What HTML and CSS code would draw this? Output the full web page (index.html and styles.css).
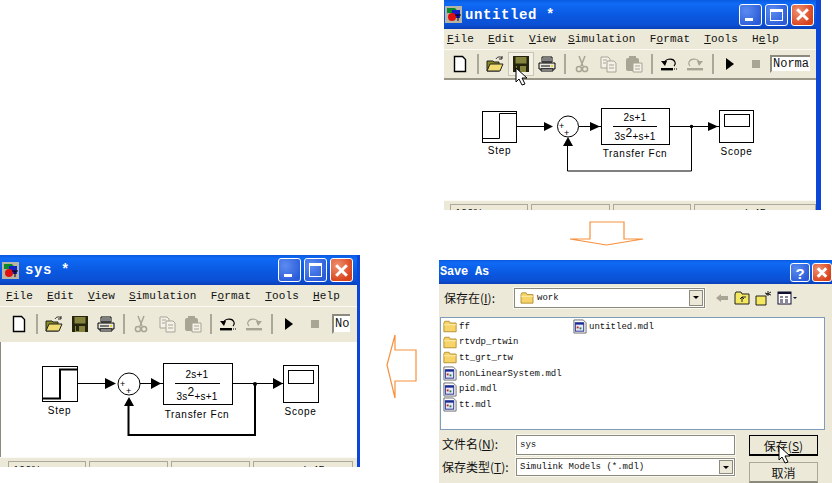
FILE: index.html
```html
<!DOCTYPE html>
<html lang="en">
<head>
  <meta charset="UTF-8">
  <title>Saving a Simulink model</title>
  <link rel="stylesheet" href="styles.css">
</head>
<body>
  <svg class="icon-defs" width="0" height="0">
    <symbol id="i-app" viewBox="0 0 17 17">
      <rect x="0" y="0" width="17" height="17" fill="#b8b4a4"/>
      <path d="M2 2h8l4 5H2z" fill="#0a8a2a"/>
      <rect x="7" y="4" width="8" height="8" fill="#1420c8"/>
      <circle cx="7" cy="11" r="4" fill="#e01010"/>
      <path d="M10 9h6M13 9v6" stroke="#000" fill="none"/>
    </symbol>
    <symbol id="i-new" viewBox="0 0 18 18">
      <path d="M3.500 1.500h8l3 3v12h-11z" fill="#fff" stroke="#000" stroke-width="1.400"/>
    </symbol>
    <symbol id="i-open" viewBox="0 0 18 18">
      <path d="M1 6h6l1 1h5v9H1z" fill="#8a8a20" stroke="#222" />
      <path d="M1 16l3-7h13l-3 7z" fill="#f0dc70" stroke="#222"/>
      <path d="M10 4c1-2 4-3 6-1M16 1v3h-3" fill="none" stroke="#222"/>
    </symbol>
    <symbol id="i-save" viewBox="0 0 18 18">
      <rect x="1" y="1" width="16" height="16" fill="#25250c"/>
      <rect x="3.500" y="2" width="11" height="6.500" fill="#84843f"/>
      <rect x="4" y="11" width="10" height="6" fill="#84843f"/>
      <rect x="5" y="11" width="3" height="5" fill="#25250c"/>
    </symbol>
    <symbol id="i-print" viewBox="0 0 18 18">
      <path d="M4 2h10v5H4z" fill="#fff" stroke="#000"/>
      <path d="M1 8h16v6H1z" fill="#e8e8e0" stroke="#000"/>
      <path d="M3 14h12v2H3z" fill="#fff" stroke="#000"/>
      <path d="M5 4h8M5 6h8M3 11h9" stroke="#000"/>
      <rect x="13" y="10" width="2" height="2" fill="#e8d830"/>
    </symbol>
    <symbol id="i-cut" viewBox="0 0 18 18">
      <path d="M6 1l4 10M12 1L8 11" stroke="#a8a595" stroke-width="1.500" fill="none"/>
      <circle cx="6" cy="14" r="2.600" fill="none" stroke="#a8a595" stroke-width="1.500"/>
      <circle cx="12" cy="14" r="2.600" fill="none" stroke="#a8a595" stroke-width="1.500"/>
    </symbol>
    <symbol id="i-copy" viewBox="0 0 18 18">
      <path d="M2 2h7l2 2v9H2z" fill="#f4f2e8" stroke="#a8a595"/>
      <path d="M8 6h7l2 2v9H8z" fill="#f4f2e8" stroke="#a8a595"/>
      <path d="M4 5h4M4 8h3M10 10h5M10 13h5" stroke="#a8a595"/>
    </symbol>
    <symbol id="i-paste" viewBox="0 0 18 18">
      <rect x="1" y="3" width="13" height="13" rx="2" fill="#a8a595"/>
      <rect x="4" y="1" width="7" height="3" fill="#a8a595"/>
      <path d="M8 8h9v9H8z" fill="#f4f2e8" stroke="#a8a595"/>
      <path d="M10 11h5M10 14h5" stroke="#a8a595"/>
    </symbol>
    <symbol id="i-undo" viewBox="0 0 18 18">
      <path d="M5 9C3 4 13 2 15 7c1 2 0 3-1 4" fill="none" stroke="#000" stroke-width="1.200"/>
      <path d="M1 6l4 5 2-5z" fill="#000"/>
      <rect x="1" y="13" width="12" height="2.400" fill="#000"/>
      <path d="M14 14h3" stroke="#000" stroke-dasharray="1 1"/>
    </symbol>
    <symbol id="i-redo" viewBox="0 0 18 18">
      <path d="M13 9C15 4 5 2 3 7c-1 2 0 3 1 4" fill="none" stroke="#a8a595" stroke-width="1.200"/>
      <path d="M17 6l-4 5-2-5z" fill="#a8a595"/>
      <rect x="1" y="13" width="16" height="2.400" fill="#a8a595"/>
    </symbol>
    <symbol id="i-play" viewBox="0 0 18 18">
      <path d="M5 3l8 6-8 6z" fill="#000"/>
    </symbol>
    <symbol id="i-stop" viewBox="0 0 18 18">
      <rect x="5" y="5" width="8" height="8" fill="#a8a595"/>
    </symbol>
    <symbol id="i-folder" viewBox="0 0 16 14">
      <path d="M1 3l1-2h5l1 2h7v10H1z" fill="#f6d469" stroke="#b08a2a"/>
      <path d="M1 5h14" stroke="#fff2b8"/>
    </symbol>
    <symbol id="i-model" viewBox="0 0 15 16">
      <path d="M1 1h10l3 3v11H1z" fill="#fff" stroke="#666"/>
      <rect x="2.500" y="4" width="9" height="9" fill="#e8e8f8" stroke="#1a2a90"/>
      <rect x="2.500" y="4" width="9" height="2" fill="#1a2a90"/>
      <rect x="4" y="8" width="2" height="2" fill="#c02020"/>
      <rect x="7" y="9" width="2" height="2" fill="#208040"/>
    </symbol>
  </svg>

  <!-- Model window before saving -->
  <section class="window window-untitled">
    <div class="titlebar">
      <svg class="app-icon"><use href="#i-app"/></svg>
      <span class="title-text">untitled *</span>
      <div class="caption-btns">
        <span class="cap-btn cap-min"></span>
        <span class="cap-btn cap-max"></span>
        <span class="cap-btn cap-close"></span>
      </div>
    </div>
    <div class="menubar">
      <span><u>F</u>ile</span><span><u>E</u>dit</span><span><u>V</u>iew</span><span class="menu-sim"><u>S</u>imulation</span><span>F<u>o</u>rmat</span><span><u>T</u>ools</span><span>H<u>e</u>lp</span>
    </div>
    <div class="toolbar">
      <span class="tool"><svg><use href="#i-new"/></svg></span>
      <span class="sep"></span>
      <span class="tool"><svg><use href="#i-open"/></svg></span>
      <span class="tool tool-hover"><svg><use href="#i-save"/></svg></span>
      <span class="tool"><svg><use href="#i-print"/></svg></span>
      <span class="sep"></span>
      <span class="tool"><svg><use href="#i-cut"/></svg></span>
      <span class="tool"><svg><use href="#i-copy"/></svg></span>
      <span class="tool"><svg><use href="#i-paste"/></svg></span>
      <span class="sep"></span>
      <span class="tool"><svg><use href="#i-undo"/></svg></span>
      <span class="tool"><svg><use href="#i-redo"/></svg></span>
      <span class="sep"></span>
      <span class="tool"><svg><use href="#i-play"/></svg></span>
      <span class="tool"><svg><use href="#i-stop"/></svg></span>
      <span class="mode-box">Normal</span>
    </div>
    <div class="canvas">
      <svg class="diagram" width="372" height="120" viewBox="444 81 372 120">
        <rect class="block" x="482.500" y="112.500" width="34" height="31"/>
        <path class="wire" d="M483 139.500h16.500V114.500H516"/>
        <path class="wire" d="M517 127.500h30M579 127.500h22M670 127.500h50M691.500 127.500V172H567.500V146"/>
        <path class="head" d="M544 123l9 4.500-9 4.500zM590 123l10 4.500-10 4.500zM708 123l10 4.500-10 4.500zM568 138l5 9h-10z"/>
        <circle class="block" cx="568" cy="127.500" r="10.500"/>
        <circle cx="691.500" cy="127.500" r="1.800"/>
        <text class="sign" x="559" y="130">+</text>
        <text class="sign" x="564" y="137">+</text>
        <rect class="block" x="601.500" y="109.500" width="68" height="36"/>
        <text class="tf" x="635" y="122" text-anchor="middle">2s+1</text>
        <path class="wire" d="M613 127.500h44"/>
        <text class="tf" x="635" y="141" text-anchor="middle">3s<tspan class="exp" dy="-3">2</tspan><tspan dy="3">+s+1</tspan></text>
        <rect class="block" x="719.500" y="111.500" width="34" height="32"/>
        <rect class="block" x="724.500" y="115.500" width="25" height="12"/>
        <text class="label" x="499.500" y="155" text-anchor="middle">Step</text>
        <text class="label" x="635" y="158" text-anchor="middle">Transfer Fcn</text>
        <text class="label" x="736.500" y="156" text-anchor="middle">Scope</text>
      </svg>
    </div>
    <div class="statusbar">
      <span class="cell cell-zoom">100%</span><span class="cell cell-mid"></span><span class="cell cell-mid"></span><span class="cell cell-solver">ode45</span>
    </div>
    <svg class="cursor cursor-save" width="14" height="19" viewBox="0 0 14 19"><path d="M1 1v14l3-3 3 6 3-1-3-6h5z" fill="#fff" stroke="#000"/></svg>
  </section>

  <svg class="block-arrow arrow-down" width="76" height="26" viewBox="0 0 76 26">
    <path d="M21 1h34v17h19L37.500 24 1 18h20z"/>
  </svg>

  <!-- Save As dialog -->
  <section class="dialog">
    <div class="dialog-title">
      <span class="title-text title-dialog">Save As</span>
      <div class="caption-btns">
        <span class="cap-btn cap-help">?</span>
        <span class="cap-btn cap-close"></span>
      </div>
    </div>
    <div class="look-row">
      <span class="field-label look-label">保存在(<u>I</u>):</span>
      <div class="combo combo-look">
        <svg class="folder"><use href="#i-folder"/></svg>
        <span>work</span>
        <span class="combo-btn"></span>
      </div>
      <div class="dialog-tools">
        <svg width="14" height="12" viewBox="0 0 14 12"><path d="M1 6l5-4v2h7v4H6v2z" fill="#a8a595"/></svg>
        <svg width="16" height="14" viewBox="0 0 16 14"><path d="M1 3l1-2h5l1 2h7v10H1z" fill="#f4e860" stroke="#222"/><path d="M8 11V6M6 8l2-2 2 2M8 6h4" stroke="#222" fill="none"/></svg>
        <svg width="17" height="16" viewBox="0 0 17 16"><path d="M1 6h10v9H1z" fill="#f4e860" stroke="#222"/><path d="M13 1v5M10 3l6 2M16 2l-5 3" stroke="#222"/></svg>
        <svg width="21" height="14" viewBox="0 0 21 14"><rect x="1" y="1" width="13" height="12" fill="#fff" stroke="#113"/><rect x="1" y="1" width="13" height="2" fill="#113"/><path d="M3 6h3M8 6h3M3 9h3M8 9h3M3 11h3M8 11h3" stroke="#113"/><path d="M16 6h4l-2 2z" fill="#113"/></svg>
      </div>
    </div>
    <div class="file-list">
      <div class="file-col">
        <div class="file"><svg><use href="#i-folder"/></svg>ff</div>
        <div class="file"><svg><use href="#i-folder"/></svg>rtvdp_rtwin</div>
        <div class="file"><svg><use href="#i-folder"/></svg>tt_grt_rtw</div>
        <div class="file"><svg><use href="#i-model"/></svg>nonLinearSystem.mdl</div>
        <div class="file"><svg><use href="#i-model"/></svg>pid.mdl</div>
        <div class="file"><svg><use href="#i-model"/></svg>tt.mdl</div>
      </div>
      <div class="file-col">
        <div class="file"><svg><use href="#i-model"/></svg>untitled.mdl</div>
      </div>
    </div>
    <div class="save-form">
      <span class="field-label">文件名(<u>N</u>):</span>
      <div class="combo combo-name">sys</div>
      <button class="dlg-btn dlg-default">保存(<u>S</u>)</button>
      <span class="field-label">保存类型(<u>T</u>):</span>
      <div class="combo combo-type">Simulink Models (*.mdl)<span class="combo-btn"></span></div>
      <button class="dlg-btn dlg-cancel">取消</button>
    </div>
    <svg class="cursor cursor-dlg" width="14" height="19" viewBox="0 0 14 19"><path d="M1 1v14l3-3 3 6 3-1-3-6h5z" fill="#fff" stroke="#000"/></svg>
  </section>

  <svg class="block-arrow arrow-left" width="31" height="65" viewBox="0 0 31 65">
    <path d="M9 1v15h21v31H9v17L1 31z"/>
  </svg>

  <!-- Model window after saving -->
  <section class="window window-sys">
    <div class="titlebar">
      <svg class="app-icon"><use href="#i-app"/></svg>
      <span class="title-text">sys *</span>
      <div class="caption-btns">
        <span class="cap-btn cap-min"></span>
        <span class="cap-btn cap-max"></span>
        <span class="cap-btn cap-close"></span>
      </div>
    </div>
    <div class="menubar">
      <span><u>F</u>ile</span><span><u>E</u>dit</span><span><u>V</u>iew</span><span><u>S</u>imulation</span><span>F<u>o</u>rmat</span><span><u>T</u>ools</span><span><u>H</u>elp</span>
    </div>
    <div class="toolbar">
      <span class="tool"><svg><use href="#i-new"/></svg></span>
      <span class="sep"></span>
      <span class="tool"><svg><use href="#i-open"/></svg></span>
      <span class="tool"><svg><use href="#i-save"/></svg></span>
      <span class="tool"><svg><use href="#i-print"/></svg></span>
      <span class="sep"></span>
      <span class="tool"><svg><use href="#i-cut"/></svg></span>
      <span class="tool"><svg><use href="#i-copy"/></svg></span>
      <span class="tool"><svg><use href="#i-paste"/></svg></span>
      <span class="sep"></span>
      <span class="tool"><svg><use href="#i-undo"/></svg></span>
      <span class="tool"><svg><use href="#i-redo"/></svg></span>
      <span class="sep"></span>
      <span class="tool"><svg><use href="#i-play"/></svg></span>
      <span class="tool"><svg><use href="#i-stop"/></svg></span>
      <span class="mode-box">Normal</span>
    </div>
    <div class="canvas">
      <svg class="diagram" width="354" height="116" viewBox="0 342 354 116">
        <rect class="block" x="41.500" y="366.500" width="35" height="35"/>
        <path class="wire wire-thick" d="M42 398.500h17V369.500H77"/>
        <path class="wire" d="M77 383.500h28M139 383.500h23M231 383.500h51"/>
        <path class="wire wire-thick" d="M254 384V435H127.500V404"/>
        <path class="head" d="M104 378l11 5.500-11 5.500zM150 378l10 5.500-10 5.500zM272 378l10 5.500-10 5.500zM128 397l5 9h-10z"/>
        <circle class="block" cx="128" cy="384" r="11"/>
        <circle cx="254" cy="384" r="2"/>
        <text class="sign" x="119" y="387">+</text>
        <text class="sign" x="125" y="394">+</text>
        <rect class="block" x="162.500" y="363.500" width="69" height="41"/>
        <text class="tf" x="196" y="378" text-anchor="middle">2s+1</text>
        <path class="wire" d="M174 383.500h45"/>
        <text class="tf" x="196" y="400" text-anchor="middle">3s<tspan class="exp" dy="-4">2</tspan><tspan dy="4">+s+1</tspan></text>
        <rect class="block" x="282.500" y="365.500" width="35" height="37"/>
        <rect class="block" x="287.500" y="370.500" width="25" height="13"/>
        <text class="label" x="58.500" y="414" text-anchor="middle">Step</text>
        <text class="label" x="196" y="418" text-anchor="middle">Transfer Fcn</text>
        <text class="label" x="299.500" y="415" text-anchor="middle">Scope</text>
      </svg>
    </div>
    <div class="statusbar">
      <span class="cell cell-zoom">100%</span><span class="cell cell-mid"></span><span class="cell cell-mid"></span><span class="cell cell-solver">ode45</span>
    </div>
  </section>
</body>
</html>
```

FILE: styles.css
```css
* {
  margin: 0;
  padding: 0;
  box-sizing: border-box;
}

body {
  width: 832px;
  height: 483px;
  background: white;
  overflow: hidden;
  position: relative;
  font-family: "Liberation Mono", monospace;
  color: #111;
}

u {
  text-decoration: underline;
}

.icon-defs {
  position: absolute;
}

/* Windows sit on a free canvas */
.window,
.dialog {
  position: absolute;
  display: flex;
  flex-direction: column;
  overflow: hidden;
}

.window-untitled {
  left: 444px;
  top: 0;
  width: 377px;
  height: 210px;
  border-right: 5px solid #0b46d8;
}

.window-sys {
  left: 0;
  top: 255px;
  width: 360px;
  height: 212px;
  border-right: 3px solid #0b46d8;
}

.dialog {
  left: 439px;
  top: 260px;
  width: 393px;
  height: 223px;
  background: #ece9d8;
}

/* Title bars */
.titlebar,
.dialog-title {
  display: flex;
  align-items: center;
  flex: none;
  background: linear-gradient(180deg, #0a5ae0 0%, #0f6af5 12%, #0a58e0 55%, #0b50d4 85%, #0a3fb8 100%);
  color: white;
}

.window-untitled .titlebar {
  height: 29px;
  padding: 0 2px 0 1px;
}

.window-sys .titlebar {
  height: 30px;
  padding: 0 4px 0 2px;
}

.dialog-title {
  height: 24px;
  padding: 0 0 0 1px;
}

.app-icon {
  width: 17px;
  height: 17px;
  flex: none;
  margin-right: 3px;
}

.window-sys .app-icon {
  margin-right: 6px;
}

.title-text {
  font-size: 14px;
  font-weight: bold;
  letter-spacing: 0.6px;
  white-space: pre;
}

.title-dialog {
  font-size: 12px;
  letter-spacing: -0.2px;
}

.caption-btns {
  margin-left: auto;
  display: flex;
  gap: 3px;
}

.cap-btn {
  position: relative;
  display: block;
  width: 23px;
  height: 22px;
  border: 1px solid white;
  border-radius: 3px;
  background: radial-gradient(circle at 30% 30%, #5c8cf0, #2a5bd8 80%);
}

.window-sys .cap-btn {
  height: 24px;
}

.cap-min::after {
  content: '';
  position: absolute;
  left: 5px;
  bottom: 4px;
  width: 8px;
  height: 3px;
  background: white;
}

.cap-max::after {
  content: '';
  position: absolute;
  left: 4px;
  top: 4px;
  right: 4px;
  bottom: 4px;
  border: 1px solid white;
  border-top-width: 3px;
}

.cap-close {
  background: radial-gradient(circle at 30% 30%, #f09070, #d8431c 75%);
}

.cap-close::before,
.cap-close::after {
  content: '';
  position: absolute;
  left: 3px;
  right: 3px;
  top: 50%;
  height: 3px;
  margin-top: -1.500px;
  background: white;
  transform: rotate(45deg);
}

.cap-close::after {
  transform: rotate(-45deg);
}

.cap-help {
  font: bold 15px "Liberation Sans", sans-serif;
  color: white;
  text-align: center;
  line-height: 20px;
}

.dialog-title .caption-btns {
  gap: 2px;
}

.dialog-title .cap-btn {
  width: 20px;
  height: 19px;
}

/* Menus and toolbars */
.menubar {
  display: flex;
  gap: 14px;
  flex: none;
  height: 21px;
  padding: 0 0 0 3px;
  align-items: center;
  background: #ece9d8;
  border-bottom: 1px solid #fbfaf5;
  font-size: 11px;
  letter-spacing: 0.15px;
}

.menu-sim {
  margin-left: -2px;
}

.window-sys .menubar {
  height: 22px;
  padding-left: 6px;
}

.toolbar {
  display: flex;
  align-items: center;
  flex: none;
  height: 30px;
  padding-left: 3px;
  background: #ece9d8;
  border-bottom: 2px solid #9a9788;
}

.window-sys .toolbar {
  height: 35px;
  padding-left: 6px;
  border-bottom-color: #ece9d8;
}

.tool {
  width: 26px;
  height: 24px;
  display: flex;
  align-items: center;
  justify-content: center;
  flex: none;
}

.tool svg {
  width: 18px;
  height: 18px;
}

.tool-hover {
  background: #f3f1e6;
  box-shadow: inset 0 0 0 1px #c9c6b6;
}

.sep {
  width: 2px;
  height: 20px;
  flex: none;
  margin: 0 3px 0 4px;
  background: #aca899;
}

.mode-box {
  margin-left: 1px;
  width: 40px;
  height: 18px;
  flex: none;
  overflow: hidden;
  background: white;
  border: 2px solid #8c8a7c;
  border-right: 0;
  border-bottom-color: #ece9d8;
  font-size: 12px;
  line-height: 15px;
  padding-left: 1px;
  white-space: nowrap;
}

.window-sys .mode-box {
  margin-left: 4px;
  width: 18px;
  height: 20px;
  line-height: 17px;
}

.canvas {
  flex: 1;
  min-height: 0;
  background: white;
}

.window-sys .canvas {
  border-left: 1px solid #8c8a7c;
}

.diagram {
  display: block;
}

.block {
  fill: white;
  stroke: #000;
  stroke-width: 1;
}

.wire {
  fill: none;
  stroke: #000;
  stroke-width: 1;
}

.wire-thick {
  stroke-width: 2;
}

.head {
  fill: #000;
}

.sign {
  font: 9px "Liberation Sans", sans-serif;
}

.tf {
  font: 10px "Liberation Sans", sans-serif;
  letter-spacing: 0.2px;
}

.exp {
  font-size: 12px;
}

.label {
  font: 10px "Liberation Sans", sans-serif;
  letter-spacing: 0.7px;
}

/* Status bar, cut off by the screenshot */
.statusbar {
  display: flex;
  gap: 3px;
  flex: none;
  height: 10px;
  padding: 3px 0 0 6px;
  overflow: hidden;
  background: #ece9d8;
  border-top: 1px solid #fbfaf5;
}

.window-sys .statusbar {
  padding-left: 8px;
}

.cell {
  height: 22px;
  border: 1px solid #aca899;
  font: 11px/16px "Liberation Sans", sans-serif;
  padding-left: 4px;
}

.cell-zoom {
  width: 78px;
}

.cell-mid {
  width: 79px;
}

.cell-solver {
  width: 122px;
  padding-left: 40px;
}

.window-sys .cell-solver {
  width: 100px;
}

/* Dialog body */
.look-row {
  display: flex;
  align-items: center;
  height: 28px;
  padding-left: 5px;
}

.field-label {
  font: 12px/18px "Noto Sans CJK SC", "Liberation Sans", sans-serif;
}

.look-label {
  width: 70px;
  flex: none;
}

.combo {
  position: relative;
  display: flex;
  align-items: center;
  background: white;
  border: 1px solid #8c8a7c;
  box-shadow: 0 0 0 1px #f8f7f0;
  font-size: 9px;
}

.combo-look {
  width: 191px;
  height: 20px;
  gap: 3px;
  padding-left: 5px;
}

.folder {
  width: 14px;
  height: 12px;
}

.combo-btn {
  position: absolute;
  right: 1px;
  top: 1px;
  bottom: 1px;
  width: 14px;
  background: #ece9d8;
  border: 1px solid #8c8a7c;
}

.combo-btn::after {
  content: '';
  position: absolute;
  left: 3px;
  top: 5px;
  border: 3px solid transparent;
  border-top-color: #000;
}

.dialog-tools {
  display: flex;
  align-items: center;
  gap: 5px;
  margin-left: 10px;
}

.file-list {
  display: flex;
  height: 113px;
  margin: 5px 7px 0 1px;
  padding: 1px 2px;
  background: white;
  border: 1px solid #7f9db9;
  font-size: 9px;
}

.file-col {
  width: 130px;
}

.file {
  display: flex;
  align-items: center;
  gap: 2px;
  height: 15.600px;
  white-space: nowrap;
}

.file svg {
  width: 14px;
  height: 15px;
  flex: none;
}

.save-form {
  display: grid;
  grid-template-columns: 74px 219px 83px;
  row-gap: 2px;
  align-items: start;
  margin-top: 5px;
  padding-left: 3px;
}

.combo-name {
  height: 20px;
  padding-left: 3px;
}

.combo-type {
  height: 18px;
  padding-left: 3px;
}

.dlg-btn {
  margin-left: 14px;
  width: 69px;
  height: 21px;
  background: #ece9d8;
  border: 1px solid #aca899;
  border-bottom: 2px solid #8c8a7c;
  font: 12px "Noto Sans CJK SC", "Liberation Sans", sans-serif;
  color: #111;
}

.dlg-default {
  border: 1px solid #000;
  border-bottom: 2px solid #000;
}

.dlg-cancel {
  margin-top: 4px;
}

.cursor {
  position: absolute;
}

.cursor-save {
  left: 71px;
  top: 67px;
}

.cursor-dlg {
  left: 339px;
  top: 185px;
}

/* Orange step arrows */
.block-arrow {
  position: absolute;
  fill: white;
  stroke: #f7903c;
  stroke-width: 1.200;
}

.arrow-down {
  left: 569px;
  top: 221px;
}

.arrow-left {
  left: 386px;
  top: 334px;
}
```
